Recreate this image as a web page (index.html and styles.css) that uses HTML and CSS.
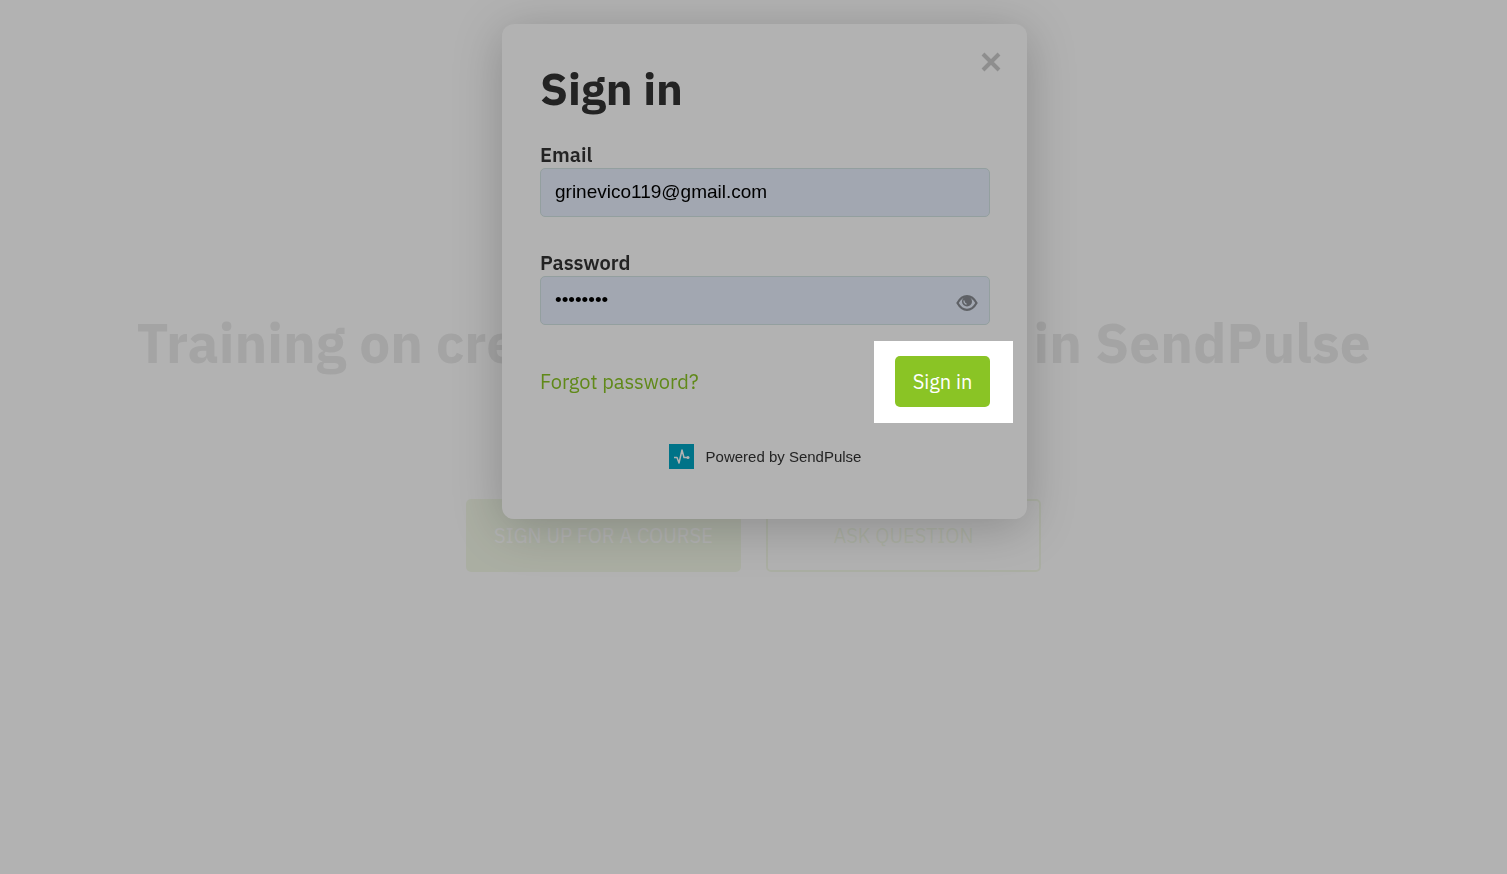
FILE: index.html
```html
<!DOCTYPE html>
<html lang="en">
<head>
    <meta charset="UTF-8">
    <meta name="viewport" content="width=device-width, initial-scale=1.0">
    <title>Sign in</title>
    <link rel="stylesheet" href="styles.css">
</head>
<body>
    <main class="hero">
        <h1 class="hero-title">Training on creating landing pages in SendPulse</h1>
        <div class="hero-actions">
            <a class="hero-button filled" href="#signup">SIGN UP FOR A COURSE</a>
            <a class="hero-button" href="#question">ASK QUESTION</a>
        </div>
    </main>

    <div class="overlay">
        <section class="modal" role="dialog" aria-labelledby="modalTitle">
            <button class="close-button" type="button" aria-label="Close">
                <svg width="20" height="20" viewBox="0 0 20 20" fill="none" stroke="currentColor" stroke-width="4">
                    <path d="M2 2L18 18M18 2L2 18"/>
                </svg>
            </button>
            <h2 class="modal-title" id="modalTitle">Sign in</h2>
            <form>
                <div class="field">
                    <label for="email">Email</label>
                    <input type="email" id="email" value="grinevico119@gmail.com">
                </div>
                <div class="field">
                    <label for="password">Password</label>
                    <input type="password" id="password" value="password">
                    <button class="show-password" type="button" aria-label="Show password">
                        <svg width="22" height="16" viewBox="0 0 22 16">
                            <path fill="none" stroke="currentColor" stroke-width="2.200" d="M1.500 8C4 3.500 7.500 1.200 11 1.200S18 3.500 20.500 8C18 12.500 14.500 14.800 11 14.800S4 12.500 1.500 8Z"/>
                            <circle fill="currentColor" cx="11" cy="6.500" r="5"/>
                            <path fill="none" stroke="#e8f0fe" stroke-width="1.300" stroke-linecap="round" d="M8 6Q8 8.500 10 9"/>
                        </svg>
                    </button>
                </div>
                <div class="form-actions">
                    <a class="forgot" href="#forgot">Forgot password?</a>
                    <div class="submit-wrap">
                        <button class="submit-button" type="submit">Sign in</button>
                        <div class="spotlight"></div>
                    </div>
                </div>
            </form>
            <div class="powered">
                <svg width="25" height="25" viewBox="0 0 25 25">
                    <rect width="25" height="25" fill="#00a5c3"/>
                    <path d="M5 13.500H8L10 19L13 6L15 13.500H19" fill="none" stroke="#fff" stroke-width="1.500" stroke-linejoin="round"/>
                    <circle cx="19" cy="13.500" r="1.500" fill="#fff"/>
                </svg>
                <span>Powered by SendPulse</span>
            </div>
        </section>
    </div>
</body>
</html>
```
FILE: styles.css
```css
/* Global Styles */
* {
    box-sizing: border-box;
}

body {
    margin: 0;
    font-family: 'IBM Plex Sans', 'Noto Sans', sans-serif;
    font-size: 20px;
    color: #333;
    background: #fff;
    overflow: hidden;
}

a {
    color: #8ac425;
    text-decoration: none;
}

button {
    font-family: inherit;
    border: none;
    cursor: pointer;
}

/* Hero */
.hero {
    min-height: 100vh;
    display: flex;
    flex-direction: column;
    align-items: center;
    justify-content: center;
    gap: 120px;
    padding-top: 4px;
}

.hero-title {
    margin: 0;
    font-size: 55px;
    font-weight: 700;
    line-height: 72px;
    white-space: nowrap;
}

.hero-actions {
    display: flex;
    gap: 25px;
}

.hero-button {
    width: 275px;
    padding: 22px 0;
    border: 2px solid #8ac425;
    border-radius: 5px;
    line-height: 25px;
    text-align: center;
}

.hero-button.filled {
    background: #8ac425;
    color: #fff;
}

/* Modal */
.overlay {
    position: fixed;
    inset: 0;
    display: flex;
    align-items: flex-start;
    justify-content: center;
    padding: 24px 0 24px 22px;
    background: rgba(255, 255, 255, 0.9);
}

.modal {
    position: relative;
    width: 525px;
    padding: 36px 37px 50px 38px;
    border-radius: 12px;
    background: #fff;
    box-shadow: 0 8px 50px rgba(0, 0, 0, 0.22);
}

.close-button {
    position: absolute;
    top: 28px;
    right: 26px;
    display: flex;
    padding: 0;
    background: none;
    color: #ccc;
}

.modal-title {
    margin: 0 0 25px;
    font-size: 45px;
    font-weight: 700;
    line-height: 56px;
}

.field {
    position: relative;
}

.field + .field {
    margin-top: 32px;
}

.field label {
    display: block;
    font-weight: 600;
    line-height: 27px;
}

.field input {
    display: block;
    width: 100%;
    height: 49px;
    padding: 0 15px 2px 14px;
    border: 1px solid #d3e4e4;
    border-radius: 5px;
    background: #e8f0fe;
    font-family: 'Liberation Sans', Arial, sans-serif;
    font-size: 19px;
    color: #000;
}

.show-password {
    position: absolute;
    right: 12px;
    bottom: 14px;
    display: flex;
    padding: 0;
    background: none;
    color: #888c92;
}

.form-actions {
    display: flex;
    align-items: center;
    justify-content: space-between;
    margin-top: 31px;
}

.submit-wrap {
    position: relative;
}

.submit-button {
    display: block;
    width: 95px;
    padding: 12px 0;
    border-radius: 5px;
    background: #8ac425;
    color: #fff;
    font-size: 20px;
    line-height: 27px;
}

/* Dims the page around the submit button */
.spotlight {
    position: absolute;
    inset: -15px -23px -16px -21px;
    box-shadow: 0 0 0 200vmax rgba(0, 0, 0, 0.3);
    pointer-events: none;
}

.powered {
    display: flex;
    align-items: center;
    justify-content: center;
    gap: 12px;
    margin-top: 37px;
    font-family: 'Liberation Sans', Arial, sans-serif;
    font-size: 15px;
}
```
